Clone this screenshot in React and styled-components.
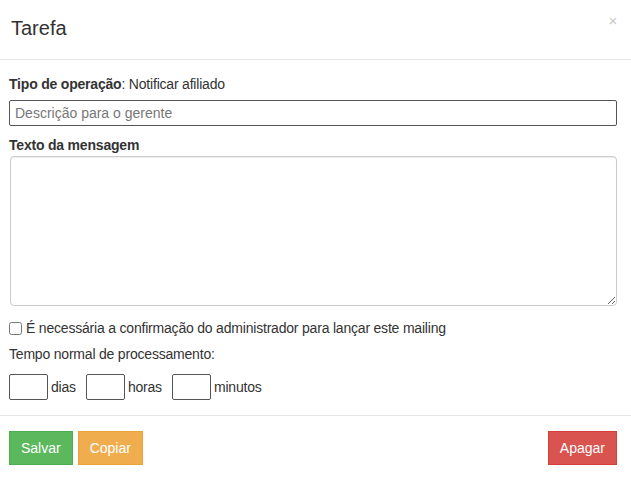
import { createGlobalStyle } from "styled-components";
import styled from "styled-components";

const GlobalStyle = createGlobalStyle`
  * {
    box-sizing: border-box;
  }

  body {
    margin: 0;
    background: #fff;
    font-family: "Liberation Sans", Arial, sans-serif;
    font-size: 14px;
    line-height: 20px;
    letter-spacing: -0.2px;
    color: #333;
  }
`;

const Modal = styled.div`
  width: 631px;
  background: #fff;
`;

const Header = styled.div`
  display: flex;
  justify-content: space-between;
  align-items: flex-start;
  padding: 14px 14px 17px 11px;
  border-bottom: 1px solid #e5e5e5;
`;

const Title = styled.h4`
  margin: 0;
  font-size: 20px;
  line-height: 28px;
  font-weight: 300;
  letter-spacing: 0;
  color: #333;
`;

const Close = styled.span`
  font-size: 15px;
  line-height: 14px;
  color: #c8c8c8;
`;

const Body = styled.div`
  padding: 14px 14px 15px 9px;
`;

const Label = styled.label`
  display: block;
  font-weight: bold;
  margin-bottom: ${(p) => p.$gap || 0}px;
`;

const Line = styled.div`
  margin-bottom: 6px;
`;

const Input = styled.input`
  display: block;
  width: 100%;
  height: 26px;
  padding: 2px 5px;
  font: inherit;
  color: #333;
  border: 1px solid #555;
  border-radius: 2px;
  margin-bottom: 9px;

  &::placeholder {
    color: #777;
  }
`;

const Textarea = styled.textarea`
  display: block;
  height: 150px;
  border: 1px solid #ccc;
  border-radius: 4px;
  font: inherit;
  margin: 0 0 12px 1px;
  width: calc(100% - 1px);
  box-shadow: inset 0 1px 1px rgba(0, 0, 0, 0.075);
`;

const CheckRow = styled.label`
  display: flex;
  align-items: center;
  gap: 4px;
  margin-bottom: 6px;

  input {
    margin: 0;
    width: 13px;
    height: 13px;
  }
`;

const TimeRow = styled.div`
  display: flex;
  align-items: center;
  margin-top: 10px;
`;

const SmallInput = styled.input`
  width: 39px;
  height: 26px;
  border: 1px solid #555;
  border-radius: 2px;
  font: inherit;
  padding: 2px 4px;
`;

const Unit = styled.span`
  margin: 0 10px 0 3px;
`;

const Footer = styled.div`
  display: flex;
  align-items: center;
  padding: 15px 14px 15px 9px;
  border-top: 1px solid #e5e5e5;
  gap: 5px;
`;

const colors = {
  success: ["#5cb85c", "#4cae4c"],
  warning: ["#f0ad4e", "#eea236"],
  danger: ["#d9534f", "#d43f3a"],
};

const Button = styled.button`
  height: 34px;
  padding: 6px 11px;
  font: inherit;
  color: #fff;
  background: ${(p) => colors[p.$kind][0]};
  border: 1px solid ${(p) => colors[p.$kind][1]};
  border-radius: 0;
  margin-left: ${(p) => (p.$right ? "auto" : "0")};
`;

export default function App() {
  return (
    <>
      <GlobalStyle />
      <Modal>
        <Header>
          <Title>Tarefa</Title>
          <Close>×</Close>
        </Header>
        <Body>
          <Line>
            <b>Tipo de operação</b>: Notificar afiliado
          </Line>
          <Input placeholder="Descrição para o gerente" />
          <Label $gap={1}>Texto da mensagem</Label>
          <Textarea />
          <CheckRow>
            <input type="checkbox" />
            <span>É necessária a confirmação do administrador para lançar este mailing</span>
          </CheckRow>
          <div>Tempo normal de processamento:</div>
          <TimeRow>
            <SmallInput />
            <Unit>dias</Unit>
            <SmallInput />
            <Unit>horas</Unit>
            <SmallInput />
            <Unit>minutos</Unit>
          </TimeRow>
        </Body>
        <Footer>
          <Button $kind="success">Salvar</Button>
          <Button $kind="warning">Copiar</Button>
          <Button $kind="danger" $right>
            Apagar
          </Button>
        </Footer>
      </Modal>
    </>
  );
}
